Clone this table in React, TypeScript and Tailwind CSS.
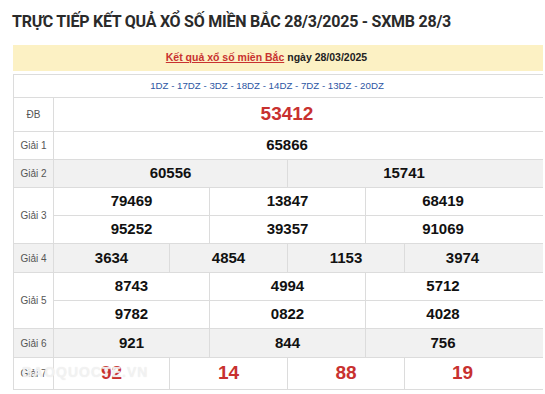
import React from "react"

// column widths inside the number area (53px → 520px, plus 23px spare on the right)
const COLS: Record<number, string> = {
  1: "grid-cols-[1fr]",
  2: "grid-cols-[234px_1fr]",
  3: "grid-cols-[156px_156px_1fr]",
  4: "grid-cols-[116px_118px_117px_1fr]",
}

type Row = { label: string; lines: string[][]; gray?: boolean; big?: boolean; red?: boolean; h: string }

const rows: Row[] = [
  { label: "ĐB", lines: [["53412"]], big: true, red: true, h: "h-[33px]" },
  { label: "Giải 1", lines: [["65866"]], h: "h-[27px]" },
  { label: "Giải 2", lines: [["60556", "15741"]], gray: true, h: "h-[27px]" },
  { label: "Giải 3", lines: [["79469", "13847", "68419"], ["95252", "39357", "91069"]], h: "h-[27px]" },
  { label: "Giải 4", lines: [["3634", "4854", "1153", "3974"]], gray: true, h: "h-[28px]" },
  { label: "Giải 5", lines: [["8743", "4994", "5712"], ["9782", "0822", "4028"]], h: "h-[27px]" },
  { label: "Giải 6", lines: [["921", "844", "756"]], gray: true, h: "h-[28px]" },
  { label: "Giải 7", lines: [["92", "14", "88", "19"]], big: true, red: true, h: "h-[31px]" },
]

function Line({ nums, row, last }: { nums: string[]; row: Row; last: boolean }) {
  return (
    <div className={`grid ${COLS[nums.length]} ${last ? "" : "border-b border-[#dcdcdc]"}`}>
      {nums.map((n, i) => (
        <div
          key={i}
          className={`${row.h} flex items-center justify-center font-bold ${
            row.big ? "text-[19px]" : "text-[15px]"
          } ${row.red ? "text-[#c8312f]" : "text-[#111]"} ${
            i < nums.length - 1 ? "border-r border-[#dcdcdc]" : "pr-[23px]"
          }`}
        >
          {n}
        </div>
      ))}
    </div>
  )
}

export default function App() {
  return (
    <div className="w-[545px] h-[394px] bg-white overflow-hidden font-['Liberation_Sans',Arial,sans-serif]">
      <h1 className="pl-[12px] pt-[10px] h-[45px] font-['Roboto',sans-serif] font-bold text-[16px] text-[#2a2a2a] tracking-[-0.25px]">
        TRỰC TIẾP KẾT QUẢ XỔ SỐ MIỀN BẮC 28/3/2025 - SXMB 28/3
      </h1>

      <div className="ml-[13px] w-[530px]">
        {/* date banner */}
        <div className="h-[26px] bg-[#fcf1c4] flex items-center justify-center pr-[23px] text-[10.5px] font-bold text-[#222]">
          <span className="text-[#c8312f] underline">Kết quả xổ số miền Bắc</span>
          <span className="ml-[3px]">ngày 28/03/2025</span>
        </div>

        <div className="mt-[3px] border-t border-l border-[#dcdcdc] relative">
          <div className="h-[23px] flex items-center justify-center pr-[23px] text-[9.7px] text-[#2d56a3] border-b border-[#dcdcdc]">
            1DZ - 17DZ - 3DZ - 18DZ - 14DZ - 7DZ - 13DZ - 20DZ
          </div>

          {rows.map((row) => (
            <div
              key={row.label}
              className={`flex border-b border-[#dcdcdc] ${row.gray ? "bg-[#f1f1f1]" : "bg-white"}`}
            >
              <div className="w-[40px] shrink-0 flex items-center justify-center border-r border-[#dcdcdc] text-[10px] text-[#555]">
                {row.label}
              </div>
              <div className="flex-1">
                {row.lines.map((nums, i) => (
                  <Line key={i} nums={nums} row={row} last={i === row.lines.length - 1} />
                ))}
              </div>
            </div>
          ))}

          {/* watermark */}
          <div className="absolute left-[8px] bottom-[7px] text-[14px] font-bold tracking-[1px] text-white/50 pointer-events-none [text-shadow:0_0_1px_#e2e2e2]">
            BAOQUOCTE.VN
          </div>
        </div>
      </div>
    </div>
  )
}
